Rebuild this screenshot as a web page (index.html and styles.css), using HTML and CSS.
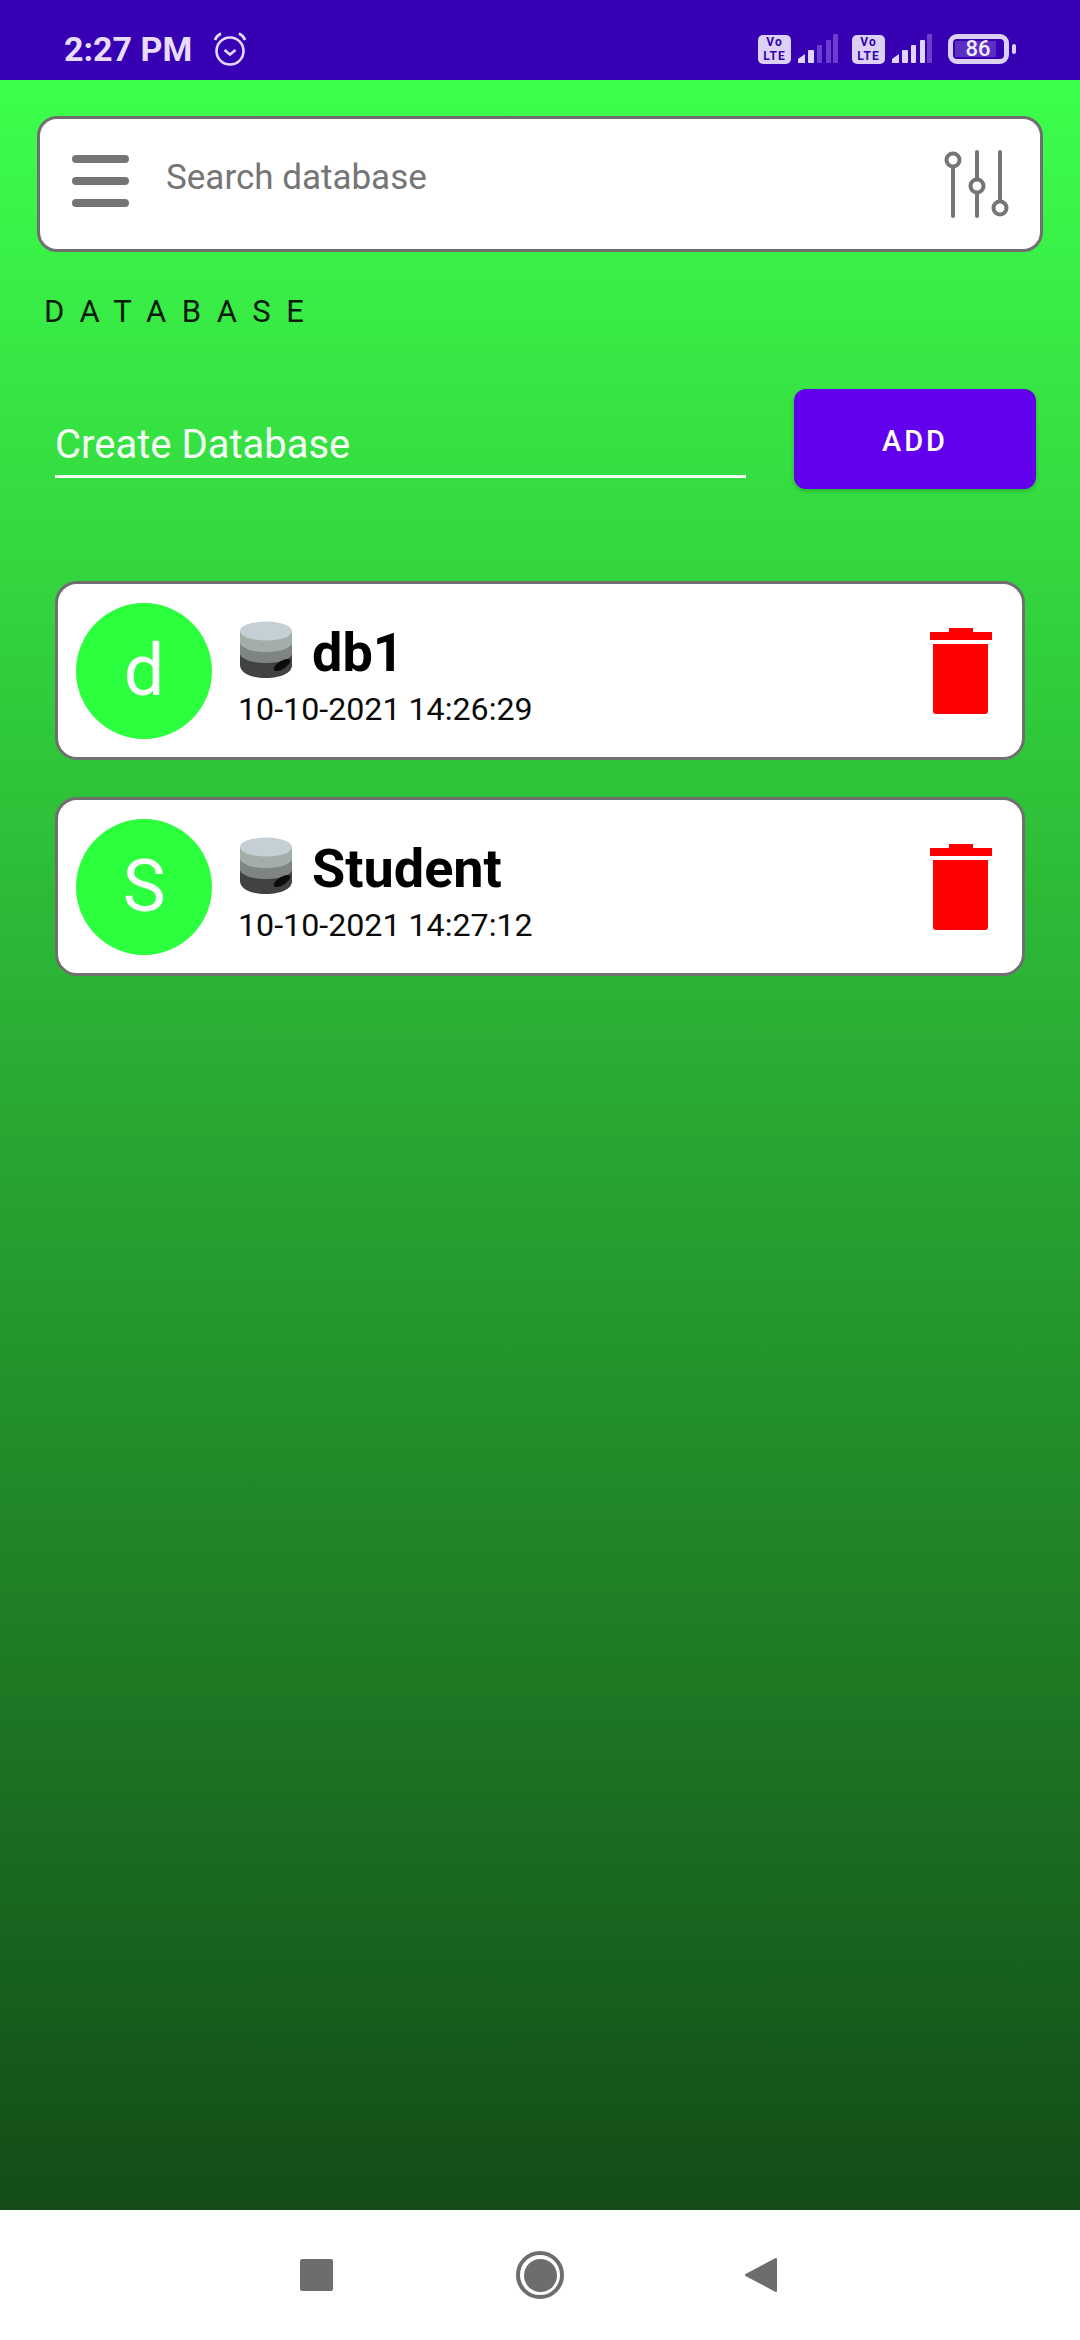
FILE: index.html
```html
<!DOCTYPE html>
<html lang="en">
  <head>
    <meta charset="UTF-8" />
    <meta name="viewport" content="width=device-width, initial-scale=1.0" />
    <title>Database</title>
    <link rel="stylesheet" href="styles.css">
  </head>
  <body>
    <div id="phone">
      <div class="status-bar">
        <span class="clock">2:27 PM</span>
        <svg class="alarm" width="36" height="36" viewBox="0 0 36 36">
          <circle cx="18" cy="20" r="13.500" fill="none" stroke="#e6d8fa" stroke-width="2.600" />
          <path d="M12.500 19l5.500 4.500 5.500-4.500" fill="none" stroke="#e6d8fa" stroke-width="2.600" />
          <path d="M3 9c1-3 3-5 6-6.500M33 9c-1-3-3-5-6-6.500" fill="none" stroke="#e6d8fa" stroke-width="2.600" />
        </svg>
        <div class="status-right">
          <div class="volte"><span>Vo</span><span>LTE</span></div>
          <svg class="signal" width="40" height="30" viewBox="0 0 40 30">
            <path d="M0 29v-4l7-5v9z" fill="#e0d4f7" />
            <rect x="10" y="16" width="6" height="13" rx="1" fill="#e0d4f7" />
            <rect x="19" y="11" width="5" height="18" rx="1" fill="#6a3fd0" />
            <rect x="28" y="6" width="5" height="23" rx="1" fill="#6a3fd0" />
            <rect x="35" y="0" width="5" height="29" rx="1" fill="#6a3fd0" />
          </svg>
          <div class="volte second"><span>Vo</span><span>LTE</span></div>
          <svg class="signal" width="40" height="30" viewBox="0 0 40 30">
            <path d="M0 29v-4l7-5v9z" fill="#e0d4f7" />
            <rect x="10" y="16" width="6" height="13" rx="1" fill="#e0d4f7" />
            <rect x="19" y="11" width="5" height="18" rx="1" fill="#e0d4f7" />
            <rect x="28" y="6" width="5" height="23" rx="1" fill="#e0d4f7" />
            <rect x="35" y="0" width="5" height="29" rx="1" fill="#6a3fd0" />
          </svg>
          <div class="battery"><div class="battery-level">86</div></div>
          <div class="battery-tip"></div>
        </div>
      </div>

      <div class="content">
        <div class="search-box">
          <div class="menu-icon"><i></i><i></i><i></i></div>
          <span class="search-txt">Search database</span>
          <svg class="filter-icon" width="66" height="68" viewBox="0 0 66 68">
            <g fill="none" stroke="#757575" stroke-width="4" stroke-linecap="round">
              <path d="M9 18v48M33 2v26M33 44v22M56 2v48" />
              <circle cx="9" cy="10" r="6.500" />
              <circle cx="33" cy="36" r="6.500" />
              <circle cx="56" cy="58" r="6.500" />
            </g>
          </svg>
        </div>

        <h2 class="title">DATABASE</h2>

        <div class="create-row">
          <div class="create-input">Create Database</div>
          <button type="button" class="add-btn">ADD</button>
        </div>

        <div class="db-list">
          <div class="db-card">
            <div class="avatar">d</div>
            <div class="db-info">
              <div class="db-name">
                <svg class="db-icon" width="54" height="58" viewBox="0 0 54 58">
                  <use href="#db-shape" />
                </svg>
                <span>db1</span>
              </div>
              <p class="db-date">10-10-2021 14:26:29</p>
            </div>
            <svg class="trash" width="62" height="86" viewBox="0 0 62 86">
              <use href="#trash-shape" />
            </svg>
          </div>

          <div class="db-card">
            <div class="avatar">S</div>
            <div class="db-info">
              <div class="db-name">
                <svg class="db-icon" width="54" height="58" viewBox="0 0 54 58">
                  <use href="#db-shape" />
                </svg>
                <span>Student</span>
              </div>
              <p class="db-date">10-10-2021 14:27:12</p>
            </div>
            <svg class="trash" width="62" height="86" viewBox="0 0 62 86">
              <use href="#trash-shape" />
            </svg>
          </div>
        </div>
      </div>

      <div class="nav-bar">
        <div class="nav-square"></div>
        <div class="nav-home"></div>
        <svg class="nav-back" width="34" height="38" viewBox="0 0 34 38">
          <path d="M32 3v32L2 19z" fill="#6d6d6d" stroke="#6d6d6d" stroke-width="2" stroke-linejoin="round" />
        </svg>
      </div>
    </div>

    <!-- shared icon shapes -->
    <svg class="defs" width="0" height="0">
      <defs>
        <g id="db-shape">
          <path d="M1 44c0 8 11 13 26 13s26-5 26-13V32H1z" fill="#404341" />
          <path d="M1 32c0 6 11 10 26 10s26-4 26-10V21H1z" fill="#7e8583" />
          <path d="M1 21c0 6 11 10 26 10s26-4 26-10V10H1z" fill="#a4aea9" />
          <ellipse cx="27" cy="10" rx="26" ry="9.500" fill="#c4d0d3" />
          <ellipse cx="43" cy="44" rx="9.500" ry="4" transform="rotate(-32 43 44)" fill="#0c0c0c" />
        </g>
        <g id="trash-shape" fill="#f00">
          <path d="M19 0h24v4H19z" />
          <path d="M0 4h62v8H0z" />
          <path d="M3 16h55v67a3 3 0 0 1-3 3H6a3 3 0 0 1-3-3z" />
        </g>
      </defs>
    </svg>
  </body>
</html>
```
FILE: styles.css
```css
* {
  box-sizing: border-box;
  margin: 0;
  padding: 0;
}
body {
  font-family: Roboto, "Liberation Sans", sans-serif;
  background-color: #fff;
}
#phone {
  width: 1080px;
  height: 2340px;
  display: flex;
  flex-direction: column;
  overflow: hidden;
}
.defs {
  display: block;
}

/* status bar */
.status-bar {
  height: 80px;
  flex: none;
  background-color: #3700b3;
  display: flex;
  align-items: center;
  padding: 18px 64px 0 64px;
  color: #e9dcfb;
}
.clock {
  font-size: 34px;
  font-weight: 700;
}
.alarm {
  margin-left: 20px;
}
.status-right {
  margin-left: auto;
  display: flex;
  align-items: center;
}
.volte {
  width: 33px;
  height: 29px;
  border-radius: 5px;
  background-color: #dcd0f5;
  color: #3700b3;
  font-size: 12px;
  font-weight: 700;
  line-height: 14px;
  letter-spacing: 1px;
  display: flex;
  flex-direction: column;
  align-items: center;
  justify-content: center;
}
.volte.second {
  margin-left: 14px;
}
.signal {
  margin-left: 7px;
}
.battery {
  width: 61px;
  height: 30px;
  margin-left: 16px;
  border: 5px solid #dcd0f5;
  border-radius: 9px;
  padding: 2px 8px 2px 2px;
}
.battery-level {
  height: 16px;
  padding-left: 5px;
  background-color: #5a2fc4;
  color: #f3ecff;
  font-size: 22px;
  font-weight: 500;
  line-height: 16px;
  text-align: center;
}
.battery-tip {
  width: 4px;
  height: 10px;
  margin-left: 3px;
  background-color: #dcd0f5;
  border-radius: 2px;
}

/* main area */
.content {
  flex: 1;
  background: linear-gradient(#3dff4b, #134c17);
  padding: 36px 37px 0;
}
.search-box {
  height: 136px;
  background-color: #fff;
  border: 3px solid #6f6f6f;
  border-radius: 20px;
  display: flex;
  align-items: center;
  padding: 0 30px 0 32px;
}
.menu-icon {
  width: 57px;
  display: flex;
  flex-direction: column;
  gap: 14px;
  margin-top: -6px;
}
.menu-icon i {
  display: block;
  height: 8px;
  border-radius: 4px;
  background-color: #757575;
}
.search-txt {
  margin-left: 37px;
  font-size: 35px;
  color: #757575;
  margin-top: -14px;
}
.filter-icon {
  margin-left: auto;
}
.title {
  margin: 42px 0 0 7px;
  font-size: 31px;
  line-height: 36px;
  font-weight: 400;
  letter-spacing: 15.500px;
  color: #0a1a0a;
}
.create-row {
  display: flex;
  align-items: center;
  margin-top: 59px;
  padding: 0 7px 0 18px;
}
.create-input {
  width: 691px;
  border-bottom: 3px solid #f2fff2;
  color: #f6fff6;
  font-size: 40px;
  line-height: 46px;
  padding: 12px 0 7px;
  margin-top: 10px;
}
.add-btn {
  margin-left: auto;
  width: 242px;
  height: 100px;
  padding-top: 3px;
  background-color: #6200ee;
  border: none;
  border-radius: 12px;
  box-shadow: 0 2px 4px rgba(0, 0, 0, 0.2);
  color: #fff;
  font-family: inherit;
  font-size: 29px;
  font-weight: 500;
  letter-spacing: 3px;
}

/* database cards */
.db-list {
  margin-top: 92px;
  padding: 0 18px;
  display: flex;
  flex-direction: column;
  gap: 37px;
}
.db-card {
  height: 179px;
  background-color: #fff;
  border: 3px solid #6f6f6f;
  border-radius: 22px;
  display: flex;
  align-items: center;
  padding: 0 30px 0 18px;
}
.avatar {
  width: 136px;
  height: 136px;
  flex: none;
  border-radius: 50%;
  background-color: #2bff3e;
  color: #fff;
  font-size: 72px;
  font-weight: 400;
  display: flex;
  align-items: center;
  justify-content: center;
}
.db-info {
  margin: 8px 0 0 26px;
}
.db-name {
  display: flex;
  align-items: center;
  gap: 19px;
  font-size: 54px;
  font-weight: 700;
  line-height: 64px;
  color: #000;
}
.db-icon {
  margin: -6px 0 0 1px;
}
.db-date {
  margin-top: 5px;
  font-size: 32.200px;
  line-height: 38px;
  color: #0a0a0a;
}
.trash {
  margin-left: auto;
}

/* navigation bar */
.nav-bar {
  height: 130px;
  flex: none;
  background-color: #fff;
  display: flex;
  align-items: center;
  padding: 0 0 0 300px;
}
.nav-square {
  width: 33px;
  height: 32px;
  border-radius: 2px;
  background-color: #6d6d6d;
}
.nav-home {
  width: 48px;
  height: 48px;
  margin-left: 183px;
  border-radius: 50%;
  border: 4px solid #6d6d6d;
  padding: 3.500px;
  background-color: #6d6d6d;
  background-clip: content-box;
}
.nav-back {
  margin-left: 180px;
}
```
